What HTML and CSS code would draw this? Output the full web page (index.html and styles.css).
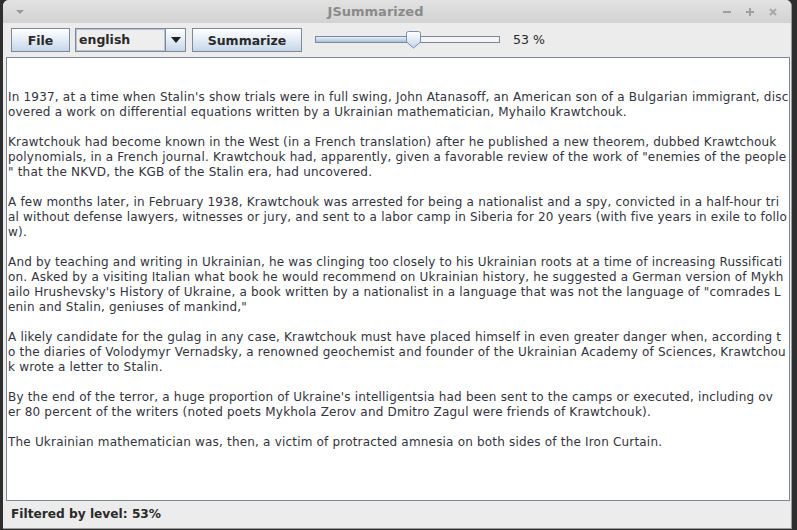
FILE: index.html
```html
<!DOCTYPE html>
<html>
<head>
<meta charset="utf-8">
<link rel="stylesheet" href="styles.css">
</head>
<body>
<div class="window">
  <div class="titlebar">
    <svg class="menu-arrow" width="10" height="6" viewBox="0 0 10 6"><path d="M1 1 L9 1 L5 5 Z" fill="#9a9a9a"/></svg>
    <div class="title">JSummarized</div>
    <div class="controls">
      <svg width="10" height="10" viewBox="0 0 10 10"><rect x="1" y="4" width="8" height="2" fill="#a0a0a0"/></svg>
      <svg width="10" height="10" viewBox="0 0 10 10"><rect x="1" y="4" width="8" height="2" fill="#a0a0a0"/><rect x="4" y="1" width="2" height="8" fill="#a0a0a0"/></svg>
      <svg width="10" height="10" viewBox="0 0 10 10"><path d="M2 2 L8 8 M8 2 L2 8" stroke="#a8a8a8" stroke-width="2"/></svg>
    </div>
  </div>
  <div class="toolbar">
    <div class="btn btn-file">File</div>
    <div class="combo">
      <div class="combo-field">english</div>
      <div class="combo-arrow"><svg width="10" height="6" viewBox="0 0 10 6"><path d="M0 0 L10 0 L5 6 Z" fill="#222"/></svg></div>
    </div>
    <div class="btn btn-sum">Summarize</div>
    <div class="slider">
      <div class="track"><div class="track-fill"></div></div>
      <svg class="thumb" width="17" height="18" viewBox="0 0 17 18">
        <defs><linearGradient id="tg" x1="0" y1="0" x2="0" y2="1"><stop offset="0" stop-color="#ffffff"/><stop offset="1" stop-color="#c4d6ea"/></linearGradient></defs>
        <path d="M1.5 2.5 Q1.5 0.5 3.5 0.5 L13.5 0.5 Q15.5 0.5 15.5 2.5 L15.5 11 L8.5 17 L1.5 11 Z" fill="url(#tg)" stroke="#7a8ea6"/>
      </svg>
    </div>
    <div class="pct">53 %</div>
  </div>
  <div class="textarea"><div class="text">In 1937, at a time when Stalin's show trials were in full swing, John Atanasoff, an American son of a Bulgarian immigrant, disc
overed a work on differential equations written by a Ukrainian mathematician, Myhailo Krawtchouk.

Krawtchouk had become known in the West (in a French translation) after he published a new theorem, dubbed Krawtchouk 
polynomials, in a French journal. Krawtchouk had, apparently, given a favorable review of the work of "enemies of the people
" that the NKVD, the KGB of the Stalin era, had uncovered.

A few months later, in February 1938, Krawtchouk was arrested for being a nationalist and a spy, convicted in a half-hour tri
al without defense lawyers, witnesses or jury, and sent to a labor camp in Siberia for 20 years (with five years in exile to follo
w).

And by teaching and writing in Ukrainian, he was clinging too closely to his Ukrainian roots at a time of increasing Russificati
on. Asked by a visiting Italian what book he would recommend on Ukrainian history, he suggested a German version of Mykh
ailo Hrushevsky's History of Ukraine, a book written by a nationalist in a language that was not the language of "comrades L
enin and Stalin, geniuses of mankind,"

A likely candidate for the gulag in any case, Krawtchouk must have placed himself in even greater danger when, according t
o the diaries of Volodymyr Vernadsky, a renowned geochemist and founder of the Ukrainian Academy of Sciences, Krawtchou
k wrote a letter to Stalin.

By the end of the terror, a huge proportion of Ukraine's intelligentsia had been sent to the camps or executed, including ov
er 80 percent of the writers (noted poets Mykhola Zerov and Dmitro Zagul were friends of Krawtchouk).

The Ukrainian mathematician was, then, a victim of protracted amnesia on both sides of the Iron Curtain.</div></div>
  <div class="status">Filtered by level: 53%</div>
</div>
</body>
</html>
```
FILE: styles.css
```css
html, body {
  margin: 0;
  padding: 0;
}
body {
  width: 797px;
  height: 530px;
  overflow: hidden;
  background: #2e2e2e;
  font-family: "DejaVu Sans", sans-serif;
}
.window {
  margin-left: 3px;
  width: 788px;
  height: 528px;
  background: #ececec;
  border-radius: 6px 6px 0 0;
  border-right: 1px solid #9a9a9a;
  border-bottom: 1px solid #9a9a9a;
  display: flex;
  flex-direction: column;
  overflow: hidden;
}
.titlebar {
  height: 23px;
  flex: none;
  background: linear-gradient(#e2e2e2, #d2d2d2);
  display: flex;
  align-items: center;
}
.menu-arrow {
  margin-left: 12px;
}
.title {
  flex: 1;
  text-align: center;
  font-weight: bold;
  font-size: 13px;
  color: #8a8a8a;
  margin-left: 4px;
}
.controls {
  display: flex;
  gap: 13px;
  margin-right: 13px;
}
.toolbar {
  height: 29px;
  flex: none;
  padding-top: 5px;
  padding-left: 5px;
  margin: 0 1px 0 3px;
  display: flex;
  align-items: flex-start;
  border-bottom: 1px solid #7a8a9c;
}
.btn {
  height: 22px;
  border: 1px solid #7a8a9c;
  background: linear-gradient(#ffffff, #e6eef7 45%, #c6d6e8);
  font-weight: bold;
  font-size: 12.5px;
  color: #2a2a2a;
  display: flex;
  align-items: center;
  justify-content: center;
}
.btn-file {
  width: 57px;
}
.combo {
  margin-left: 5px;
  width: 111px;
  height: 24px;
  box-sizing: border-box;
  display: flex;
  border: 1px solid #7a8a9c;
}
.combo-field {
  flex: 1;
  background: #eeeeee;
  border: 1px solid #b8c4d2;
  font-weight: bold;
  font-size: 12.5px;
  color: #2a2a2a;
  padding-left: 2px;
  line-height: 19px;
}
.combo-arrow {
  width: 19px;
  border-left: 1px solid #7a8a9c;
  background: linear-gradient(#ffffff, #e6eef7 45%, #c6d6e8);
  display: flex;
  align-items: center;
  justify-content: center;
}
.btn-sum {
  margin-left: 6px;
  width: 108px;
}
.slider {
  margin-left: 13px;
  width: 185px;
  height: 24px;
  position: relative;
}
.track {
  margin-top: 8px;
  height: 5px;
  border: 1px solid #7a8a9c;
  background: #f4f4f4;
}
.track-fill {
  width: 92px;
  height: 100%;
  background: linear-gradient(#e8f0f8, #aac0da);
}
.thumb {
  position: absolute;
  left: 90px;
  top: 3px;
}
.pct {
  margin-left: 13px;
  font-size: 12.5px;
  color: #2a2a2a;
  line-height: 24px;
}
.textarea {
  margin-left: 3px;
  width: 784px;
  height: 443px;
  box-sizing: border-box;
  border: 1px solid #7a8a9c;
  border-top: none;
  background: #ffffff;
  flex: none;
}
.text {
  white-space: pre;
  font-size: 12px;
  letter-spacing: 0.19px;
  line-height: 15px;
  color: #333340;
  padding: 32px 0 0 1px;
}
.status {
  flex: 1;
  padding-left: 8px;
  font-weight: bold;
  font-size: 12.2px;
  color: #2a2a2a;
  line-height: 27px;
}
```
